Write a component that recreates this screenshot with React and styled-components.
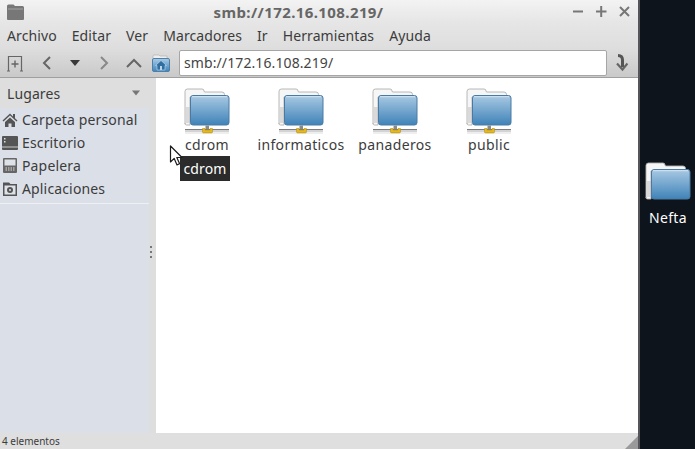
import React from "react";
import styled, { createGlobalStyle } from "styled-components";

const Global = createGlobalStyle`
  html, body { margin: 0; padding: 0; background: #0d141b; }
  body { font-family: "Noto Sans", "Open Sans", sans-serif; color: #3c3c3c; }
  * { box-sizing: border-box; }
`;

const Screen = styled.div`
  width: 695px; height: 449px; display: flex; overflow: hidden; position: relative;
`;
const Win = styled.div`
  width: 640px; height: 449px; display: flex; flex-direction: column;
  border-right: 2px solid #56565a; background: #fff;
`;
const Chrome = styled.div`
  height: 78px; flex: none; display: flex; flex-direction: column;
  background: linear-gradient(#f3f3f3 0, #e6e6e6 22px, #dedede 48px, #c9c9c9 77px);
  border-bottom: 1px solid #9f9f9f;
`;
const TitleBar = styled.div`
  height: 23px; display: flex; align-items: center; justify-content: space-between; padding: 0 8px 0 7px; flex: none;
`;
const Title = styled.div`
  font-size: 15px; font-weight: 700; color: #666; letter-spacing: 0.4px;
`;
const WinButtons = styled.div`display: flex; gap: 12px; align-items: center;`;
const Menu = styled.div`
  height: 25px; display: flex; align-items: center; padding-left: 7px; gap: 15px; font-size: 14px; color: #3c3c3c; flex: none; letter-spacing: 0.1px;
`;
const Toolbar = styled.div`
  height: 29px; display: flex; align-items: center; padding: 0 0 0 6px; flex: none;
`;
const ToolSlot = styled.div`
  width: ${p => p.$w}px; height: 24px; display: flex; align-items: center; justify-content: ${p => p.$start ? "flex-start" : "center"}; flex: none;
`;
const AddressBox = styled.div`
  width: 428px; height: 26px; margin-left: 5px; background: #fff; border: 1px solid #a6a6a6; border-radius: 2px;
  display: flex; align-items: center; padding-left: 4px; font-size: 14px; color: #444; letter-spacing: 0.1px;
`;
const Body = styled.div`flex: 1; display: flex; min-height: 0;`;
const Sidebar = styled.div`
  width: 156px; flex: none; background: #dbe0e8; display: flex; flex-direction: column; position: relative;
`;
const SideHead = styled.div`
  height: 30px; background: #dedede; display: flex; align-items: center; justify-content: space-between; padding: 0 16px 0 7px;
  font-size: 14px; color: #3c3c3c; letter-spacing: 0.1px; flex: none;
`;
const Row = styled.div`
  height: 23px; display: flex; align-items: center; gap: 4px; padding-left: 2px; font-size: 14px; color: #3c3c3c; letter-spacing: 0.15px; flex: none;
`;
const Sep = styled.div`height: 1px; background: #eef0f3; margin: 3px 6px 0 0;`;
const Grip = styled.div`
  position: absolute; right: 0; top: 0; bottom: 0; width: 7px; background: #dedede;
  display: flex; flex-direction: column; align-items: center; justify-content: center; gap: 3px; padding: 0 3px 7px 0;
`;
const Dot = styled.span`width: 2px; height: 2px; background: #777;`;
const Content = styled.div`
  flex: 1; background: #fff; display: flex; align-items: flex-start; padding: 10px 0 0 4px; position: relative;
`;
const Item = styled.div`
  width: 94px; display: flex; flex-direction: column; align-items: center; font-size: 14px; color: #3c3c3c; letter-spacing: 0.35px; line-height: 18px;
`;
const Tip = styled.div`
  position: absolute; left: 24px; top: 78px; width: 50px; height: 25px; background: #2b2b2b; color: #fff; font-size: 14px;
  display: flex; align-items: center; justify-content: center; letter-spacing: 0.15px;
`;
const Cursor = styled.svg`position: absolute; left: 13px; top: 67px;`;
const Status = styled.div`
  height: 16px; flex: none; background: #dfdfdf; font-size: 10px; color: #3c3c3c; display: flex; align-items: center; padding-left: 2px; position: relative;
`;
const Corner = styled.svg`position: absolute; right: 0; bottom: 0;`;
const Desktop = styled.div`
  flex: 1; background: #0d141b; display: flex; flex-direction: column; align-items: center; padding: 162px 0 0 1px;
`;
const DeskLabel = styled.div`color: #fff; font-size: 14px; margin-top: 6px; letter-spacing: 0.3px;`;

function Folder({ share, id }) {
  return (
    <svg width="48" height={share ? 48 : 40} viewBox={share ? "0 0 48 48" : "0 0 48 40"}>
      <defs>
        <linearGradient id={id} x1="0" y1="0" x2="0" y2="1">
          <stop offset="0" stopColor="#a9c9e3" />
          <stop offset="1" stopColor="#3f83b8" />
        </linearGradient>
      </defs>
      <path d="M2 36V3.5A2.5 2.5 0 0 1 4.500 1H19a2 2 0 0 1 2 2l.5 1H39a2.500 2.500 0 0 1 2.500 2.500V9H7v28H3.500A1.500 1.500 0 0 1 2 35.500z" fill="#f6f6f6" stroke="#b0b0b0" strokeWidth="0.9" />
      <path d="M3 20h4M3 22h4M3 24h4M3 26h4M3 28h4M3 30h4M3 32h4M3 34h4" stroke="#bdbdbd" strokeWidth="1" />
      <rect x="7.500" y="7.500" width="38.500" height="29.500" rx="2.500" fill={`url(#${id})`} stroke="#4a7aa3" strokeWidth="1" />
      <path d="M9 8.700h35" stroke="#d3e4f2" strokeWidth="1" />
      {share && (
        <g>
          <rect x="22.500" y="37.500" width="3.500" height="3.500" fill="#8a8a8a" />
          <path d="M2 41.500h44" stroke="#7d7d7d" strokeWidth="1" />
          <path d="M2 43h44" stroke="#c4c4c4" strokeWidth="1.400" />
          <path d="M2 45h44" stroke="#dddddd" strokeWidth="1" />
          <path d="M19.500 40.500h2.500v1.500h5v-1.500h2.500v3.400a1 1 0 0 1-1 1h-8a1 1 0 0 1-1-1z" fill="#e6b81f" stroke="#a98708" strokeWidth="0.5" />
        </g>
      )}
    </svg>
  );
}

const Chevron = ({ d, c = "#666" }) => (
  <svg width="14" height="16" viewBox="0 0 14 16"><path d={d} fill="none" stroke={c} strokeWidth="2" /></svg>
);
const Down = ({ c = "#3a3a3a", w = 10 }) => (
  <svg width={w} height="6" viewBox="0 0 10 6"><path d="M0 0h10L5 6z" fill={c} /></svg>
);

const items = ["cdrom", "informaticos", "panaderos", "public"];

export default function App() {
  return (
    <Screen>
      <Global />
      <Win>
        <Chrome>
          <TitleBar>
            <svg width="17" height="16" viewBox="0 0 17 16"><path d="M0 15V2a1.500 1.500 0 0 1 1.500-1.500h5L8 2h7.500A1.500 1.500 0 0 1 17 3.500V15a1 1 0 0 1-1 1H1a1 1 0 0 1-1-1z" fill="#777" /><path d="M1 5h15" stroke="#a5a5a5" /></svg>
            <Title>smb://172.16.108.219/</Title>
            <WinButtons>
              <svg width="11" height="11" viewBox="0 0 11 11"><path d="M0 5.500h10" stroke="#777" strokeWidth="2" /></svg>
              <svg width="11" height="11" viewBox="0 0 11 11"><path d="M0 5.500h10.500M5.200 0v11" stroke="#777" strokeWidth="2" /></svg>
              <svg width="11" height="11" viewBox="0 0 11 11"><path d="M1 1l9 9M10 1l-9 9" stroke="#777" strokeWidth="2" /></svg>
            </WinButtons>
          </TitleBar>
          <Menu>
            <span>Archivo</span><span>Editar</span><span>Ver</span><span>Marcadores</span><span>Ir</span><span>Herramientas</span><span>Ayuda</span>
          </Menu>
          <Toolbar>
            <ToolSlot $w={26} $start>
              <svg width="19" height="18" viewBox="0 0 19 18"><path d="M2.500 17V2.500h13V17M1 17h3M14 17h3" fill="none" stroke="#666" strokeWidth="1.200" /><path d="M9 6.500v7M5.500 10h7" stroke="#666" strokeWidth="1.400" /></svg>
            </ToolSlot>
            <ToolSlot $w={29}><Chevron d="M10 2L4 8l6 6" /></ToolSlot>
            <ToolSlot $w={27}><Down /></ToolSlot>
            <ToolSlot $w={32}><Chevron d="M4 2l6 6-6 6" c="#888" /></ToolSlot>
            <ToolSlot $w={28}>
              <svg width="16" height="12" viewBox="0 0 16 12"><path d="M1 10l7-7 7 7" fill="none" stroke="#666" strokeWidth="2" /></svg>
            </ToolSlot>
            <ToolSlot $w={26}>
              <svg width="18" height="20" viewBox="0 0 18 20">
                <defs><linearGradient id="hm" x1="0" y1="0" x2="0" y2="1"><stop offset="0" stopColor="#a8cbe6" /><stop offset="1" stopColor="#3f85bc" /></linearGradient></defs>
                <path d="M1 3a1 1 0 0 1 1-1h5l1 1h7v4H1z" fill="#eee" stroke="#aaa" strokeWidth="0.6" />
                <rect x="0.500" y="5.500" width="17" height="13" rx="1.500" fill="url(#hm)" stroke="#4f7fa6" />
                <path d="M9 7.500l5.500 5H13v4.500H5v-4.500H3.500z" fill="#2f6e9f" stroke="#b8d4ea" strokeWidth="0.7" />
                <rect x="8" y="13" width="2" height="4" fill="#b8d4ea" />
              </svg>
            </ToolSlot>
            <AddressBox>smb://172.16.108.219/</AddressBox>
            <ToolSlot $w={30}>
              <svg width="12" height="18" viewBox="0 0 12 18"><path d="M2 1.500c3 0 4.500 1.500 4.500 4.500v7" fill="none" stroke="#555" strokeWidth="3" /><path d="M1 9.500l5.500 6 5-6" fill="none" stroke="#666" strokeWidth="2.200" /></svg>
            </ToolSlot>
          </Toolbar>
        </Chrome>
        <Body>
          <Sidebar>
            <SideHead>
              <span>Lugares</span>
              <Down c="#777" w={8} />
            </SideHead>
            <Row>
              <svg width="16" height="14" viewBox="0 0 16 14"><path d="M8 0.500L0.500 7.500l1 1L8 2.500l6.500 6 1-1-2.500-2.300V1h-2v2.400z" fill="#555" /><path d="M3 9l5-4.500L13 9v5H9.500v-3.500h-3V14H3z" fill="#555" /></svg>
              Carpeta personal
            </Row>
            <Row>
              <svg width="16" height="14" viewBox="0 0 16 14"><rect width="16" height="14" rx="1" fill="#555" /><rect x="2" y="2" width="1.500" height="1.500" fill="#ddd" /><rect x="2" y="5" width="1.500" height="1.500" fill="#ddd" /><rect y="10.500" width="16" height="1" fill="#ccc" /></svg>
              Escritorio
            </Row>
            <Row>
              <svg width="16" height="15" viewBox="0 0 16 15"><rect x="1" width="14" height="15" rx="1" fill="#666" /><rect x="2.500" y="1.500" width="11" height="6" fill="#dde1e8" /><path d="M3.500 10h9M3.500 12h9" stroke="#ddd" strokeDasharray="1.500 1" /></svg>
              Papelera
            </Row>
            <Row>
              <svg width="16" height="14" viewBox="0 0 16 14"><path d="M1 14V.500h6L8.500 2H15v12z" fill="#555" /><rect x="2.500" y="3.500" width="11" height="9" fill="#dde1e8" /><circle cx="8" cy="8" r="3" fill="#555" /><circle cx="8" cy="8" r="1" fill="#dde1e8" /></svg>
              Aplicaciones
            </Row>
            <Sep />
            <Grip><Dot /><Dot /><Dot /></Grip>
          </Sidebar>
          <Content>
            {items.map((t, i) => (
              <Item key={t}>
                <Folder share id={"f" + i} />
                <span>{t}</span>
              </Item>
            ))}
            <Tip>cdrom</Tip>
            <Cursor width="15" height="22" viewBox="0 0 15 22">
              <path d="M1.500 1v16l3.700-3.600 2.800 6.500 2.600-1.100-2.800-6.300h5.200z" fill="#fff" stroke="#1c1c1c" strokeWidth="1.200" strokeLinejoin="round" />
            </Cursor>
          </Content>
        </Body>
        <Status>
          4 elementos
          <Corner width="13" height="13" viewBox="0 0 13 13"><path d="M13 0v13H0z" fill="#9a9a9a" /></Corner>
        </Status>
      </Win>
      <Desktop>
        <Folder id="d" />
        <DeskLabel>Nefta</DeskLabel>
      </Desktop>
    </Screen>
  );
}
